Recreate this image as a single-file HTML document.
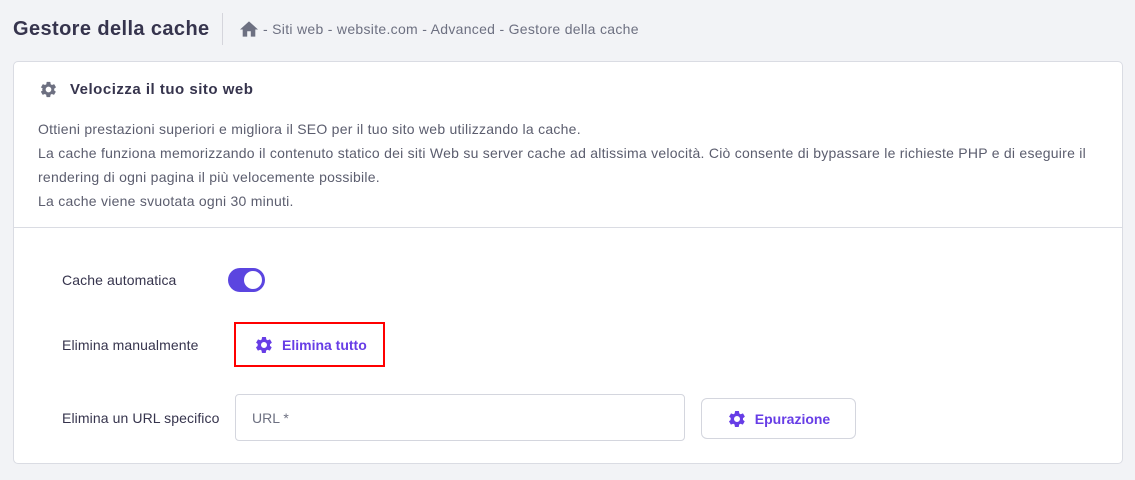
<!DOCTYPE html>
<html><head><meta charset="utf-8"><style>
*{box-sizing:border-box;margin:0;padding:0}
body{width:1135px;height:480px;background:#f2f3f6;font-family:"Liberation Sans",sans-serif;color:#2f1c6a;position:relative;overflow:hidden}
.abs{position:absolute}
.title{left:13px;top:18px;font-size:20px;font-weight:bold;color:#36344d;letter-spacing:0.4px}
.sep{left:222px;top:13px;width:1px;height:32px;background:#d5d5dc}
.bc{left:240px;top:21px;font-size:14px;color:#6d7081;display:flex;align-items:center;gap:5px;letter-spacing:0.3px}
.card{left:13px;top:61px;width:1110px;height:403px;background:#fff;border:1px solid #dadce3;border-radius:5px}
.h{left:39px;top:80px;font-size:15px;font-weight:bold;color:#36344d;display:flex;align-items:center;gap:12px;letter-spacing:0.5px}
.p{left:38px;top:117px;font-size:14px;line-height:24px;color:#5b5d6e;width:1078px;letter-spacing:0.25px}
.div{left:14px;top:227px;width:1108px;height:1px;background:#dadce3}
.lbl{font-size:14px;color:#36344d;letter-spacing:0.1px}
.tog{left:228px;top:268px;width:37px;height:24px;border-radius:12px;background:#5b45e0}
.tog::after{content:"";position:absolute;right:3px;top:3px;width:18px;height:18px;border-radius:50%;background:#fff}
.red{left:234px;top:322px;width:151px;height:45px;border:2px solid #f00}
.btn{display:flex;align-items:center;gap:8px;font-size:14px;font-weight:bold;color:#673de6}
.inp{left:235px;top:394px;width:450px;height:47px;border:1px solid #d4d6de;border-radius:4px;font-size:14px;color:#6d7081;padding:15px 16px}
.pb{left:701px;top:398px;width:155px;height:41px;border:1px solid #d4d6de;border-radius:6px;justify-content:center}
</style></head><body>
<svg width="0" height="0" style="position:absolute"><defs><path id="g" d="M19.14 12.94c.04-.3.06-.61.06-.94 0-.32-.02-.64-.07-.94l2.03-1.58a.49.49 0 0 0 .12-.61l-1.92-3.32a.49.49 0 0 0-.59-.22l-2.39.96c-.5-.38-1.03-.7-1.62-.94l-.36-2.54a.48.48 0 0 0-.48-.41h-3.84c-.24 0-.43.17-.47.41l-.36 2.54c-.59.24-1.13.57-1.62.94l-2.39-.96a.48.48 0 0 0-.59.22L2.74 8.87c-.12.21-.8.47.12.61l2.03 1.58c-.5.3-.9.63-.9.94s.2.64.7.94l-2.03 1.58a.49.49 0 0 0-.12.61l1.92 3.32c.12.22.37.29.59.22l2.39-.96c.5.38 1.03.7 1.62.94l.36 2.54c.5.24.24.41.48.41h3.84c.24 0 .44-.17.47-.41l.36-2.54c.59-.24 1.13-.56 1.62-.94l2.39.96c.22.08.47 0 .59-.22l1.920-3.32c.12-.22.07-.47-.12-.61l-2.01-1.58zM12 15.6A3.6 3.6 0 1 1 12 8.4a3.6 3.6 0 0 1 0 7.2z"/></defs></svg>
<div class="abs title">Gestore della cache</div>
<div class="abs sep"></div>
<div class="abs bc"><svg width="18" height="16" viewBox="0 0 20 17"><path d="M8 17v-6h4v6h5V9h3L10 0 0 9h3v8z" fill="#6d7081"/></svg><span>- Siti web - website.com - Advanced - Gestore della cache</span></div>
<div class="abs card"></div>
<div class="abs h"><svg width="19" height="19" viewBox="0 0 24 24"><use href="#g" fill="#6d7081"/></svg>Velocizza il tuo sito web</div>
<div class="abs p">Ottieni prestazioni superiori e migliora il SEO per il tuo sito web utilizzando la cache.<br>La cache funziona memorizzando il contenuto statico dei siti Web su server cache ad altissima velocità. Ciò consente di bypassare le richieste PHP e di eseguire il rendering di ogni pagina il più velocemente possibile.<br>La cache viene svuotata ogni 30 minuti.</div>
<div class="abs div"></div>
<div class="abs lbl" style="left:62px;top:272px">Cache automatica</div>
<div class="abs tog"></div>
<div class="abs lbl" style="left:62px;top:337px">Elimina manualmente</div>
<div class="abs red"></div>
<div class="abs btn" style="left:254px;top:335px"><svg width="20" height="20" viewBox="0 0 24 24"><use href="#g" fill="#673de6"/></svg>Elimina tutto</div>
<div class="abs lbl" style="left:62px;top:410px">Elimina un URL specifico</div>
<div class="abs inp">URL *</div>
<div class="abs btn pb"><svg width="20" height="20" viewBox="0 0 24 24"><use href="#g" fill="#673de6"/></svg>Epurazione</div>
</body></html>
